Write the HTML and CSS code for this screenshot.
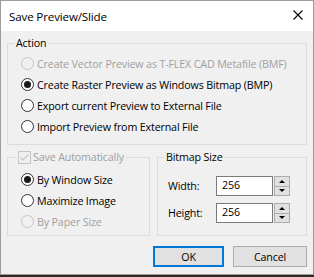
FILE: index.html
```html
<!DOCTYPE html>
<html>
<head>
<meta charset="utf-8">
<link rel="stylesheet" href="styles.css">
</head>
<body>
<div class="window">
  <div class="titlebar">
    <span class="title">Save Preview/Slide</span>
    <svg class="close" width="10" height="10" viewBox="0 0 10 10"><path d="M0.5 0.5L9.5 9.5M9.5 0.5L0.5 9.5" stroke="#000" stroke-width="1.1" fill="none"/></svg>
  </div>
  <div class="content">
    <fieldset class="group action">
      <legend class="legend">Action</legend>
      <div class="radios action-radios">
        <div class="radio disabled"><span class="circle"></span><span class="txt">Create Vector Preview as T-FLEX CAD Metafile (BMF)</span></div>
        <div class="radio checked"><span class="circle"></span><span class="txt">Create Raster Preview as Windows Bitmap (BMP)</span></div>
        <div class="radio"><span class="circle"></span><span class="txt">Export current Preview to External File</span></div>
        <div class="radio"><span class="circle"></span><span class="txt">Import Preview from External File</span></div>
      </div>
    </fieldset>
    <div class="lower">
      <fieldset class="group auto">
        <legend class="legend check-legend"><span class="check"><svg width="11" height="11" viewBox="0 0 11 11"><path d="M1.5 5.5L4 8L9.5 2.5" stroke="#c4c4c4" stroke-width="1.2" fill="none"/></svg></span><span class="disabled-text">Save Automatically</span></legend>
        <div class="radios auto-radios">
          <div class="radio checked"><span class="circle"></span><span class="txt">By Window Size</span></div>
          <div class="radio"><span class="circle"></span><span class="txt">Maximize Image</span></div>
          <div class="radio disabled"><span class="circle"></span><span class="txt">By Paper Size</span></div>
        </div>
      </fieldset>
      <fieldset class="group bitmap">
        <legend class="legend">Bitmap Size</legend>
        <div class="fields">
          <div class="field">
            <span class="lbl">Width:</span>
            <span class="edit">256</span>
            <span class="spin"><span class="sbtn"><span class="up"></span></span><span class="sbtn"><span class="down"></span></span></span>
          </div>
          <div class="field">
            <span class="lbl">Height:</span>
            <span class="edit">256</span>
            <span class="spin"><span class="sbtn"><span class="up"></span></span><span class="sbtn"><span class="down"></span></span></span>
          </div>
        </div>
      </fieldset>
    </div>
    <div class="buttons">
      <button class="btn btn-default">OK</button>
      <button class="btn">Cancel</button>
    </div>
  </div>
</div>
</body>
</html>
```

FILE: styles.css
```css
html, body {
  margin: 0;
  padding: 0;
}
body {
  width: 314px;
  height: 277px;
  overflow: hidden;
  background: #2e2a22;
  font-family: "Open Sans", "Noto Sans", sans-serif;
  font-size: 10.7px;
  letter-spacing: -0.15px;
  color: #000;
}
.window {
  width: 314px;
  height: 275px;
  box-sizing: border-box;
  border: 1px solid #9c9c9c;
  background: #f0f0f0;
  display: flex;
  flex-direction: column;
}
.titlebar {
  height: 30px;
  flex: none;
  background: #fff;
  display: flex;
  align-items: center;
  justify-content: space-between;
  padding: 0 10px 0 8px;
}
.title {
  font-size: 11.6px;
  line-height: 15px;
}
.close {
  display: block;
  margin-bottom: 2px;
}
.content {
  flex: 1;
  display: flex;
  flex-direction: column;
  padding: 5px 6px 0 6px;
}
.group {
  margin: 0;
  padding: 0;
  border: 1px solid #dcdcdc;
  min-width: 0;
}
.legend {
  margin-left: 6px;
  padding: 0 2px;
  line-height: 15px;
  height: 15px;
}
.radios {
  display: flex;
  flex-direction: column;
}
.action-radios {
  padding: 2px 0 7px 13px;
}
.radio {
  height: 21px;
  display: flex;
  align-items: center;
}
.circle {
  width: 13px;
  height: 13px;
  box-sizing: border-box;
  border: 1px solid #333;
  border-radius: 50%;
  background: #fff;
  margin-right: 3px;
  display: flex;
  align-items: center;
  justify-content: center;
  flex: none;
}
.checked .circle::after {
  content: "";
  width: 7px;
  height: 7px;
  border-radius: 50%;
  background: #1a1a1a;
}
.disabled .circle {
  border-color: #c6c6c6;
  background: #f0f0f0;
}
.disabled .txt,
.disabled-text {
  color: #a0a0a0;
}
.lower {
  display: flex;
  gap: 7px;
  margin-top: 5px;
}
.auto {
  width: 143px;
  box-sizing: border-box;
  flex: none;
}
.bitmap {
  flex: 1;
}
.check-legend {
  margin-left: 8px;
  display: flex;
  align-items: center;
  padding: 0 2px;
}
.check {
  width: 13px;
  height: 13px;
  box-sizing: border-box;
  border: 1px solid #c6c6c6;
  background: #f0f0f0;
  margin-right: 2px;
  display: flex;
  align-items: center;
  justify-content: center;
}
.check svg {
  display: block;
}
.auto-radios {
  padding: 4px 0 3px 13px;
}
.fields {
  display: flex;
  flex-direction: column;
  gap: 7px;
  padding: 11px 0 12px 10px;
}
.field {
  display: flex;
  align-items: center;
  height: 20px;
}
.lbl {
  width: 48px;
}
.edit {
  width: 57px;
  height: 20px;
  box-sizing: border-box;
  border: 1px solid #7a7a7a;
  background: #fff;
  padding-left: 5px;
  line-height: 17px;
}
.spin {
  margin-left: 1px;
  width: 16px;
  height: 20px;
  display: flex;
  flex-direction: column;
}
.sbtn {
  flex: 1;
  box-sizing: border-box;
  border: 1px solid #adadad;
  background: #e1e1e1;
  display: flex;
  align-items: center;
  justify-content: center;
}
.sbtn + .sbtn {
  border-top: none;
}
.up {
  width: 0;
  height: 0;
  border-left: 3px solid transparent;
  border-right: 3px solid transparent;
  border-bottom: 3px solid #000;
}
.down {
  width: 0;
  height: 0;
  border-left: 3px solid transparent;
  border-right: 3px solid transparent;
  border-top: 3px solid #000;
}
.buttons {
  display: flex;
  justify-content: flex-end;
  gap: 9px;
  margin-top: 10px;
}
.btn {
  height: 21px;
  width: 74px;
  box-sizing: border-box;
  border: 1px solid #adadad;
  background: #e1e1e1;
  font-family: inherit;
  font-size: inherit;
  letter-spacing: inherit;
  color: #000;
  padding: 0;
  margin: 0;
}
.btn-default {
  width: 71px;
  border: 2px solid #0078d7;
}
```
